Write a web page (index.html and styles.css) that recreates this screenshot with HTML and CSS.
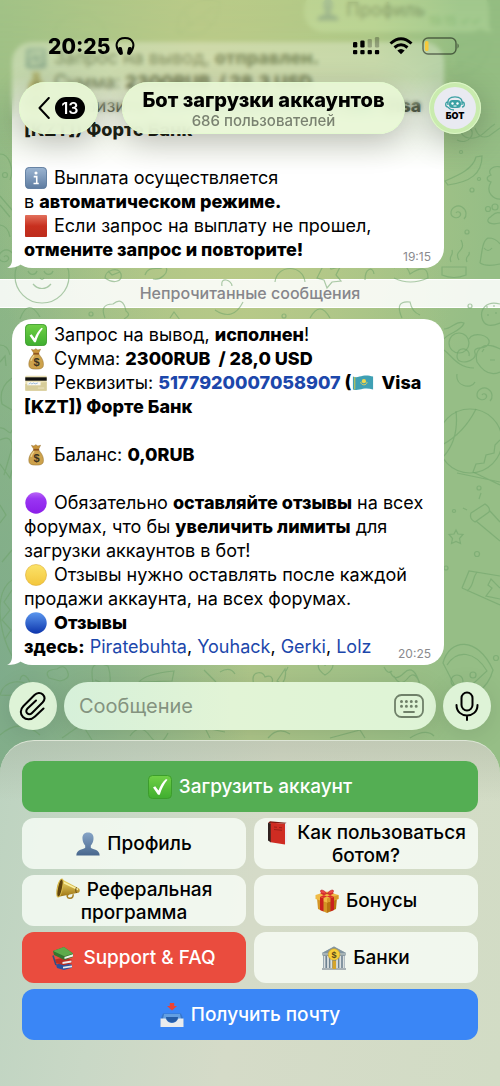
FILE: index.html
```html
<!DOCTYPE html>
<html lang="ru">
<head>
    <meta charset="UTF-8">
    <meta name="viewport" content="width=device-width, initial-scale=1.0">
    <title>Бот загрузки аккаунтов</title>
    <link rel="stylesheet" href="styles.css">
</head>
<body>
    <!-- emoji set -->
    <svg class="sprite" aria-hidden="true">
        <defs>
            <linearGradient id="g-green" x1="0" y1="0" x2="0" y2="1"><stop offset="0" stop-color="#6fd046"/><stop offset="1" stop-color="#3fae2f"/></linearGradient>
            <linearGradient id="g-info" x1="0" y1="0" x2="0" y2="1"><stop offset="0" stop-color="#9db6d3"/><stop offset="1" stop-color="#5d7ba0"/></linearGradient>
            <linearGradient id="g-red" x1="0" y1="0" x2="0" y2="1"><stop offset="0" stop-color="#e2705c"/><stop offset=".5" stop-color="#c8301f"/><stop offset="1" stop-color="#bd2c1c"/></linearGradient>
            <linearGradient id="g-purple" x1="0" y1="0" x2="0" y2="1"><stop offset="0" stop-color="#b965f5"/><stop offset=".3" stop-color="#9a35f3"/><stop offset="1" stop-color="#8b1fe8"/></linearGradient>
            <linearGradient id="g-yellow" x1="0" y1="0" x2="0" y2="1"><stop offset="0" stop-color="#fbe36a"/><stop offset="1" stop-color="#f3c63c"/></linearGradient>
            <linearGradient id="g-blue" x1="0" y1="0" x2="0" y2="1"><stop offset="0" stop-color="#5b97ee"/><stop offset="1" stop-color="#0d35ac"/></linearGradient>
            <linearGradient id="g-person" x1="0" y1="0" x2="0" y2="1"><stop offset="0" stop-color="#86a4c6"/><stop offset="1" stop-color="#48678d"/></linearGradient>
            <linearGradient id="g-gold" x1="0" y1="0" x2="0" y2="1"><stop offset="0" stop-color="#f3df70"/><stop offset="1" stop-color="#9c7212"/></linearGradient>
        </defs>
        <symbol id="e-check" viewBox="0 0 24 24">
            <rect x=".5" y=".5" width="23" height="23" rx="4" fill="url(#g-green)" stroke="#3c9d2c"/>
            <path d="M5 12.5l2.200-1.300 3.300 4.300C12 11 14.800 6.800 18 4l1.500.800C16 9 13.500 14 11.800 19.800H10z" fill="#fff"/>
        </symbol>
        <symbol id="e-refresh" viewBox="0 0 24 24">
            <rect x=".5" y=".5" width="23" height="23" rx="4" fill="url(#g-info)"/>
            <path d="M6 12a6 6 0 0 1 10-4.500M18 12a6 6 0 0 1-10 4.500M17 4v4h-4M7 20v-4h4" fill="none" stroke="#fff" stroke-width="2"/>
        </symbol>
        <symbol id="e-info" viewBox="0 0 24 24">
            <rect x=".5" y=".5" width="23" height="23" rx="4" fill="url(#g-info)" stroke="#59779b"/>
            <circle cx="12" cy="6.500" r="1.700" fill="#fff"/>
            <path d="M9.500 10.500h3.300v7M9.300 18h5.700" fill="none" stroke="#fff" stroke-width="1.700"/>
        </symbol>
        <symbol id="e-square" viewBox="0 0 24 24"><rect width="24" height="24" rx="1" fill="url(#g-red)"/></symbol>
        <symbol id="e-purple" viewBox="0 0 24 24"><circle cx="12" cy="12" r="11.700" fill="url(#g-purple)"/></symbol>
        <symbol id="e-yellow" viewBox="0 0 24 24"><circle cx="12" cy="12" r="11.500" fill="url(#g-yellow)" stroke="#dba92f" stroke-width=".6"/></symbol>
        <symbol id="e-blue" viewBox="0 0 24 24"><circle cx="12" cy="12" r="11.700" fill="url(#g-blue)"/></symbol>
        <symbol id="e-bag" viewBox="0 0 24 24">
            <path d="M9.500 5.500L7 1.500l2.800.700L11.800.800l2.200 1.400 3-.800L14.800 5.800z" fill="#c9953b" stroke="#8f6622" stroke-width=".5"/>
            <path d="M9.500 6.500C6 10.500 3.800 14 4.300 19c.400 3 2.700 4 7.900 4s7.500-1 7.800-4c.500-5-1.700-8.500-5.200-12.500z" fill="#cda24c" stroke="#94702b" stroke-width=".6"/>
            <path d="M6.500 14c.800-3 2-4.500 3.500-6" stroke="#ecd28d" stroke-width="1.400" fill="none"/>
            <path d="M9 6.300h6.500" stroke="#8b4e18" stroke-width="1.500"/>
            <text x="12.500" y="19.500" text-anchor="middle" font-size="12" font-weight="700" fill="#3d3420" font-family="Liberation Sans, sans-serif">$</text>
        </symbol>
        <symbol id="e-card" viewBox="0 0 24 24">
            <rect x=".3" y="4" width="23.400" height="16.500" rx="1" fill="#e9e0b4"/>
            <path d="M.300 13l23.400-2v8.500q0 1-1 1H1.300q-1 0-1-1z" fill="#d7cd9a"/>
            <path d="M.300 5.800h23.400v3.700H.300z" fill="#111"/>
            <path d="M2.500 11h14.500v3.500H2.500z" fill="#faf9f3"/>
            <path d="M4 13.200l2-1.200 1.500 1 2-1 1.500 1 3-1" fill="none" stroke="#6e9ccc" stroke-width=".7"/>
            <path d="M14 17.500h7" stroke="#eee6c5"/>
        </symbol>
        <symbol id="e-kz" viewBox="0 0 24 24">
            <path d="M1 5c4 1.500 7 0 11-.800S19 4 23 5v14c-4-1-7-1.500-11-.700S5 20.500 1 19z" fill="#3fa0b4"/>
            <path d="M3 5.500v13.700" stroke="#c9c552" stroke-width="1.200"/>
            <circle cx="13" cy="10" r="2.300" fill="#f0d84c"/>
            <path d="M9.500 11c.500 4 6.500 4 7 0" fill="none" stroke="#e2d05a"/>
        </symbol>
        <symbol id="e-person" viewBox="0 0 24 24">
            <path d="M12 .5c4 0 5.800 2.500 5.500 6.500-.2 3-1.300 5-2.700 6.500v2.300c1 1.700 8.700 1.200 8.900 7.700H.300c.200-6.500 7.900-6 8.900-7.700v-2.300C7.800 12 6.700 10 6.500 7 6.200 3 8 .5 12 .5z" fill="url(#g-person)"/>
        </symbol>
        <symbol id="e-book" viewBox="0 0 24 24">
            <path d="M2 2l2-1.700 16.500 1.500-1.500 1z" fill="#7c1710"/>
            <path d="M19 3l1.700-1v19L19 23.500z" fill="#eceaf0"/>
            <path d="M2 2l3 .2v19.300L2 19.500z" fill="#30211f"/>
            <path d="M4.700 1.600L19 3v20.500L4.700 21.300z" fill="#cf2c22"/>
            <path d="M8 6l3 .3M13 6.500l3 .3M8 8.500l8 .8" stroke="#8f1c15" stroke-width=".8"/>
        </symbol>
        <symbol id="e-horn" viewBox="0 0 24 24">
            <path d="M13 16c-3 1-2 4.500 1 4.300 2.500-.1 3.500-2 3-4" fill="none" stroke="#a47e22" stroke-width="1.500"/>
            <path d="M5 .8L23 10.500c1.500 1.500.700 4-.800 4.300L1.500 19C-.5 13 1 4 5 .8z" fill="url(#g-gold)"/>
            <path d="M5.500 3.500L22 11.500" stroke="#faf0a4" stroke-width="1.500"/>
            <ellipse cx="4" cy="10" rx="2.400" ry="9.200" transform="rotate(12 4 10)" fill="#5e430e" stroke="#d8ba4c" stroke-width="1.100"/>
            <path d="M20.500 9.300c-1 1.500-1 4 0 5.700" stroke="#694a10" fill="none"/>
        </symbol>
        <symbol id="e-gift" viewBox="0 0 24 24">
            <path d="M2 9l10 3.500V24L3 20z" fill="#d49524"/>
            <path d="M22 9l-10 3.500V24l9-4z" fill="#b9750f"/>
            <path d="M.500 6L12 2.500 23.500 6v4L12 13.500.500 10z" fill="#f0bb45"/>
            <path d="M12 9.500L23.500 6v4L12 13.500z" fill="#d99b2a"/>
            <path d="M5 8l3.500 1v13.500L5 21zM19 8l-3.500 1v13.500L19 21z" fill="#c9211e"/>
            <path d="M5 7.800L15.500 3.600l3.500 1L8.500 9zM19 7.800L8.500 3.600 5 4.600 15.500 9z" fill="#dd302c"/>
            <path d="M12 4.500C8 5.500 6 4.500 5.500 2.500 5 .500 8 0 12 4.500zm0 0c4 1 6 0 6.500-2C19 .500 16 0 12 4.500z" fill="#ec4844" stroke="#a61b1a" stroke-width=".5"/>
        </symbol>
        <symbol id="e-books" viewBox="0 0 24 24">
            <path d="M4 18.500l7-1.500 9 1.700v3L12 24 5 22z" fill="#2d519d"/>
            <path d="M11 20.700l9-1.200v1.800l-9 1.300z" fill="#e8e7e8"/>
            <path d="M3 13.500l9-2 8 2.300v3.500l-8.500 2L4 17z" fill="#bc2d22"/>
            <path d="M10.500 16l9-1.500v2l-9 1.500z" fill="#eeecef"/>
            <path d="M1 5L12 1l9 6.500V11l-8.500 3L2 9z" fill="#34752f"/>
            <path d="M1 5L12 1l9 6.500-8.500 2.800z" fill="#5eaa4b"/>
            <path d="M12.500 11L21 8.200v2.200l-8.500 2.700z" fill="#f1f1ec"/>
            <path d="M1 9.500l3 9.500" stroke="#344e80" stroke-width="1.600"/>
        </symbol>
        <symbol id="e-bank" viewBox="0 0 24 24">
            <path d="M1 9h22v13H1z" fill="#6e8391"/>
            <path d="M0 22h24v2H0z" fill="#a9b2b5"/>
            <path d="M2.500 10v12M6 10v12M9.300 13v9M15 13v9M18.300 10v12M21.700 10v12" stroke="#dce1e0" stroke-width="1.800"/>
            <path d="M12 .500L24 7v2.500H0V7z" fill="#a7b4b6"/>
            <path d="M12 .500L24 7H0z" fill="#8295a0"/>
            <path d="M10.500 15h3.500v8h-3.500z" fill="#d5a42a"/>
            <circle cx="12" cy="8.500" r="5.800" fill="#f6cf3b" stroke="#d0a01d" stroke-width=".6"/>
            <text x="12" y="12" text-anchor="middle" font-size="9" font-weight="700" fill="#584719" font-family="Liberation Sans, sans-serif">$</text>
        </symbol>
        <symbol id="e-inbox" viewBox="0 0 24 24">
            <path d="M3 10.500h18l2.500 6V21H.500v-4.500z" fill="#3676ca"/>
            <path d="M4 11h16l1 5H3z" fill="#639fe2"/>
            <path d="M6 14c0 7 12 7 12 0z" fill="#255da8"/>
            <path d="M.500 15.500h4.700C7 16 7 20 12 20s5-4 6.800-4.500h4.700V24H.500z" fill="#e9ecee"/>
            <path d="M9.800 0h4.400v3H17l-5 4.500L7 3h2.800z" fill="#ea4335"/>
        </symbol>
    </svg>

    <div class="app">
        <!-- wallpaper doodles -->
        <svg class="wallpaper" viewBox="0 0 500 1086" preserveAspectRatio="xMidYMin slice" aria-hidden="true">
            <defs>
                <g id="d-swirl"><path d="M0 0c2-3 6 0 4 3s-9 2-9-3 6-9 11-6 5 9 2 12"/></g>
                <g id="d-star"><path d="M0-7l2 4 5 .5-3.500 4 1 5L0 4.500-4.500 6.500l1-5-3.500-4 5-.5z"/></g>
                <g id="d-face"><circle r="27"/><path d="M-14-5c2 5 8 4 9 0M2-5c2 5 8 4 9 0M-9 8c5 6 13 6 18 0M-2 2q2 3 4 0"/></g>
                <g id="d-heart"><path d="M0 6c-9-6-8-13-3-13q3 0 3 4 1-5 5-4c6 2 2 9-5 13z"/></g>
                <g id="d-leaf"><path d="M-22 14C-26-10-6-24 20-18 18 6 2 20-22 14zM-22 14L14-13M-10 6l-4-14M-1-2l12 4"/></g>
            </defs>
            <g fill="none" stroke="#6da269" stroke-opacity=".55" stroke-width="1.200">
                <path d="M457 140c12 6 20-8 12-12s-12 8 0 10 16-8 26-14M475 128q4 12 14 8l11-8"/>
                <circle cx="461" cy="152" r="1.500"/><circle cx="472" cy="190" r="2"/><circle cx="467" cy="232" r="2"/><circle cx="479" cy="179" r="1.500"/>
                <path d="M445 181c14-6 28-12 31-24l6-1c0 18-12 26-34 29zM501 167c-8-2-14 3-10 8-6 2-4 6 0 7-6 10 2 18 11 17"/>
                <use href="#d-swirl" x="456" y="213"/><use href="#d-swirl" x="482" y="395"/><use href="#d-swirl" x="4" y="257"/>
                <circle cx="488" cy="209" r="2.500"/><circle cx="495" cy="207" r="3"/><path d="M500 213c-6-2-7 3-11 5-4 5 3 7 11 5"/>
                <path d="M480 263c2-10 2-22 8-25q8 0 12 6M480 263q6 4 20 1M484 248q4 5 8 0M451 262c-3-6 3-6 1-12M459 260c-6-10 8-8 2-20M467 262c-3-6 4-6 2-10"/>
                <path d="M442 267h24v8q-12 5-24 0z"/>
                <circle cx="470" cy="306" r="2"/><path d="M500 304c-14-4-20 6-18 14s8 9 18 5M487 306v2M494 305v2M488 314v2M496 312v2"/>
                <circle cx="459" cy="343" r="10"/><path d="M444 339c4-6 18-8 20-16-8-3-12 6-20 6M469 339c4-8 22-4 20 4s-17 2-14 10-18 14-18 3 14-8 12 0M477 362c-3-12 6-22 23-13M477 362q10 16 23 10M457 374c-2 12 14 16 18 8M444 350c8 6 14 18 30 18M484 349l-2 3M490 360h5"/>
                <circle cx="470" cy="441" r="32"/><path d="M456 411q3 28-12 45M476 409q-12 24-34 36M500 440l-5 5-1 8-8 2-2 8-8 1-3 8 27 13M457 473l43 9"/>
                <path d="M471 513l14-9q6 4 4 8l-14 10q-6-3-4-9zM489 510l11 12M476 521l24 20M479 499l2-6M467 510l-4-2"/>
                <use href="#d-star" x="456" y="537"/><circle cx="477" cy="554" r="2.500"/><circle cx="446" cy="568" r="2"/><circle cx="454" cy="511" r="1.500"/><circle cx="479" cy="488" r="2"/>
                <path d="M462 588l7-17 31 5M462 588l38 17M477 572c-6 8-2 13-10 19M500 588l-9-9-3 6 4 3-6 8 14 3"/>
                <path d="M443 663c6-24 34-28 50 7-6 22-22 26-32 28zM447 665c10-16 28-14 40 6l-24 22"/><circle cx="457" cy="681" r="6"/><circle cx="473" cy="675" r="3"/><circle cx="496" cy="658" r="2.500"/>
                <path d="M0 154c10 0 14 16 10 26M0 196l12 14M0 205l10 12M0 225q8 1 10 12"/><circle cx="5" cy="175" r="2.500"/>
                <use href="#d-face" x="42" y="276"/>
                <path d="M105 278c0-8 14-12 16-4s-8 10-16 4zM108 271l4 4 8-3M145 275c4-12 16-2 20-10 6 8-6 16-12 14M222 286c-2-10 10-6 10 0M275 282c2-18 28-18 30 0M322 268l5-6 4 7 9-2-4 8 5 6-9 1-5 6-3-8-7-2zM365 280c0-12 8-14 9-6M394 268q10-10 16 6 18-12 18 4-18 8-34 0"/>
                <path d="M20 319q8-22 20-2M105 318q-6-14 8-14 10-8 13 7 6 4-2 8M170 318l4-6 6 8M215 310q18 12 28-8M310 318q10-18 20 0M402 318q-8-18 8-16 2 10 10 13"/><circle cx="91" cy="314" r="2"/><circle cx="284" cy="316" r="2"/>
                <path d="M0 345q8 0 10 10M0 362l5-6 1 10M12 378q-14 10-10 26l10 6M0 428c6-2 10 10 12 2M0 440q12-6 12 8L4 475M0 464l10 14 2-8M0 505l6 10-6 8"/>
                <path d="M12 580c-18 12-14 50 0 76M12 590l-8 12 6 8-8 10 9 10-6 9M12 550l-10 12"/>
                <path d="M0 695c4-16 24-16 30-8-10 4-14 10-30 8zM20 680c2-10 10-2 10 6M49 678q-6-8 8-9 8-6 11 4 2 6-8 8zM92 672q0-12 16-6 6 18-4 30-12-2-12-24zM95 680l10 4M139 682q6-8 35-11l-2 10zM204 670l12 12M220 672q10-6 15 2M253 679c0-8 10-8 12-2 8-4 10 6 4 8-8 6-16 4-16-6zM277 681l8-12q2 8-3 15zM288 667l-2 4"/>
                <use href="#d-heart" x="325" y="669"/><path d="M390 671q4 12 14 2t16 12M394 676q6 12 14 2t14 12M384 667q4 8 8 4"/>
                <path d="M0 735q20-18 40 0M62 738l20-14 10 16M130 736q10-14 20 0t18-3M210 738l-5-10 20 4M268 738q10-12 22-4M330 738l30-8 5 8M410 738q16-10 24-2"/>
                <use href="#d-face" x="80" y="40"/><use href="#d-leaf" x="200" y="20"/><use href="#d-leaf" x="470" y="60"/><use href="#d-swirl" x="30" y="90"/>
            </g>
        </svg>

        <header class="header">
            <div class="status">
                <div class="status-side">
                    <span class="clock">20:25</span>
                    <svg width="20" height="20" viewBox="0 0 20 20"><path d="M5 17.500C-1.500 9 2 2 10 2s11.500 7 5 15.500" fill="none" stroke="#000" stroke-width="2"/><rect x="3.500" y="11" width="4" height="8" rx="1.800" transform="rotate(-12 5 15)"/><rect x="12.500" y="11" width="4" height="8" rx="1.800" transform="rotate(12 15 15)"/></svg>
                </div>
                <div class="status-side status-icons">
                    <svg width="27" height="18" viewBox="0 0 27 18">
                        <rect x="0" y="5" width="4.300" height="5.500" rx="1.300"/><rect x="7.300" y="3.500" width="4.300" height="7" rx="1.300"/>
                        <g opacity=".25"><rect x="14.600" y="2" width="4.300" height="8.500" rx="1.300"/><rect x="21.900" y="0" width="4.300" height="10.500" rx="1.300"/></g>
                        <rect x="0" y="13" width="4.300" height="4.300" rx="1"/><rect x="7.300" y="13" width="4.300" height="4.300" rx="1"/><rect x="14.600" y="13" width="4.300" height="4.300" rx="1"/><rect x="21.900" y="13" width="4.300" height="4.300" rx="1"/>
                    </svg>
                    <svg width="24" height="18" viewBox="0 0 24 18"><g fill="none" stroke="#000" stroke-width="3"><path d="M1.500 6.500Q12-3 22.500 6.500"/><path d="M5.500 10.500q6.500-5.500 13 0"/></g><path d="M8.300 13.500q3.700-3 7.400 0L12 17.300z"/></svg>
                    <svg width="38" height="18" viewBox="0 0 38 18"><rect x="1" y="1" width="33" height="16" rx="5" fill="none" stroke="#000" stroke-opacity=".5" stroke-width="1.400"/><rect x="3" y="4" width="3.500" height="10" rx="1.500" fill="#f6c93b"/><path d="M35.500 6.300q2.500 2.700 0 5.400z" fill-opacity=".5"/></svg>
                </div>
            </div>
            <div class="nav">
                <button class="glass back" type="button" aria-label="Назад">
                    <svg width="12" height="22" viewBox="0 0 12 22"><path d="M10.800 1L1.500 11l9.300 10" fill="none" stroke="#000" stroke-width="2" stroke-linecap="round" stroke-linejoin="round"/></svg>
                    <span class="count">13</span>
                </button>
                <div class="glass title">
                    <h1>Бот загрузки аккаунтов</h1>
                    <p>686 пользователей</p>
                </div>
                <button class="glass avatar" type="button">
                    <span class="avatar-face">
                        <svg width="20" height="15" viewBox="0 0 20 15"><g fill="none" stroke="#3ba0a3" stroke-width="1.300"><path d="M3 9C2 3 5 .8 10 .8S18 3 17 9M2.800 6Q.700 6 .700 8.500T3 11M17.200 6q2.100 0 2.100 2.500T17 11M3 11q2 3 6 3"/></g><rect x="4" y="4" width="12" height="8" rx="3.500" fill="#3ba0a3"/><circle cx="7.500" cy="7.500" r="1.200" fill="#fff"/><circle cx="12.500" cy="7.500" r="1.200" fill="#fff"/><path d="M8.500 10h3" stroke="#fff"/></svg>
                        <b>БОТ</b>
                    </span>
                </button>
            </div>
        </header>

        <main class="chat">
            <div class="bubble bubble-out">
                <svg class="emoji"><use href="#e-person"/></svg>Профиль
                <span class="time">19:15 ✓✓</span>
            </div>

            <div class="bubble">
                <svg class="emoji"><use href="#e-refresh"/></svg>Запрос на вывод, <b>отправлен.</b><br>
                <svg class="emoji"><use href="#e-bag"/></svg>Сумма: <b>2300RUB&nbsp; / 28,3 USD</b><br>
                <svg class="emoji"><use href="#e-card"/></svg>Реквизиты: <b><a href="#">5177920007058907</a> (<svg class="emoji"><use href="#e-kz"/></svg>Visa<br>
                [KZT]) Форте Банк</b><br>
                <br>
                <svg class="emoji"><use href="#e-info"/></svg>Выплата осуществляется<br>
                в <b>автоматическом режиме.</b><br>
                <svg class="emoji"><use href="#e-square"/></svg>Если запрос на выплату не прошел,<br>
                <b>отмените запрос и повторите!</b>
                <span class="time">19:15</span>
            </div>

            <div class="unread">Непрочитанные сообщения</div>

            <div class="bubble">
                <svg class="emoji"><use href="#e-check"/></svg>Запрос на вывод, <b>исполнен</b>!<br>
                <svg class="emoji"><use href="#e-bag"/></svg>Сумма: <b>2300RUB&nbsp; / 28,0 USD</b><br>
                <svg class="emoji"><use href="#e-card"/></svg>Реквизиты: <b><a href="#">5177920007058907</a> (<svg class="emoji"><use href="#e-kz"/></svg>Visa<br>
                [KZT]) Форте Банк</b><br>
                <br>
                <svg class="emoji"><use href="#e-bag"/></svg>Баланс: <b>0,0RUB</b><br>
                <br>
                <svg class="emoji"><use href="#e-purple"/></svg>Обязательно <b>оставляйте отзывы</b> на всех<br>
                форумах, что бы <b>увеличить лимиты</b> для<br>
                загрузки аккаунтов в бот!<br>
                <svg class="emoji"><use href="#e-yellow"/></svg>Отзывы нужно оставлять после каждой<br>
                продажи аккаунта, на всех форумах.<br>
                <svg class="emoji"><use href="#e-blue"/></svg><b>Отзывы<br>
                здесь:</b> <a href="#">Piratebuhta</a>, <a href="#">Youhack</a>, <a href="#">Gerki</a>, <a href="#">Lolz</a>
                <span class="time">20:25</span>
            </div>
        </main>

        <form class="composer">
            <button class="round" type="button" aria-label="Прикрепить">
                <svg width="28" height="30" viewBox="0 0 28 30"><path d="M24.500 17.500L16 25.500c-4 3.800-9 3.500-12 .5s-3-7.500.5-11L15.500 4c2.500-2.500 6-2.800 8.300-.5s2 5.500-.3 8L13 22c-1.500 1.500-3.500 1.500-4.800.3s-1.200-3.300.3-4.800L17 9.500" fill="none" stroke="#000" stroke-width="2" stroke-linecap="round"/></svg>
            </button>
            <div class="field">
                <input type="text" placeholder="Сообщение" aria-label="Сообщение">
                <button class="kb-toggle" type="button" aria-label="Клавиатура">
                    <svg width="30" height="24" viewBox="0 0 30 24"><rect x="1" y="1" width="28" height="22" rx="6.500" fill="none" stroke="#6f8069" stroke-width="1.800"/><path d="M7.500 7.500h16M7.500 12.300h16" stroke="#6f8069" stroke-width="3" stroke-dasharray="0 4.900" stroke-linecap="round"/><path d="M10 18h10" stroke="#6f8069" stroke-width="1.800" stroke-linecap="round"/></svg>
                </button>
            </div>
            <button class="round" type="button" aria-label="Голосовое сообщение">
                <svg width="24" height="30" viewBox="0 0 24 30"><g fill="none" stroke="#000" stroke-width="2" stroke-linecap="round"><rect x="6.500" y="1.500" width="11" height="18" rx="5.500"/><path d="M1.500 14c0 14 21 14 21 0M12 24.500v4.500"/></g></svg>
            </button>
        </form>

        <div class="keyboard">
            <button class="key key-green key-wide" type="button"><svg class="emoji"><use href="#e-check"/></svg>Загрузить аккаунт</button>
            <button class="key" type="button"><svg class="emoji"><use href="#e-person"/></svg>Профиль</button>
            <button class="key" type="button"><svg class="emoji"><use href="#e-book"/></svg>Как пользоваться<br>ботом?</button>
            <button class="key" type="button"><svg class="emoji"><use href="#e-horn"/></svg>Реферальная<br>программа</button>
            <button class="key" type="button"><svg class="emoji"><use href="#e-gift"/></svg>Бонусы</button>
            <button class="key key-red" type="button"><svg class="emoji"><use href="#e-books"/></svg>Support &amp; FAQ</button>
            <button class="key" type="button"><svg class="emoji"><use href="#e-bank"/></svg>Банки</button>
            <button class="key key-blue key-wide" type="button"><svg class="emoji"><use href="#e-inbox"/></svg>Получить почту</button>
        </div>
    </div>
</body>
</html>
```
FILE: styles.css
```css
* {
    box-sizing: border-box;
}
body {
    margin: 0;
    font-family: Inter, "Liberation Sans", sans-serif;
    color: #000;
}
button {
    border: none;
    padding: 0;
    font-family: inherit;
    color: inherit;
    cursor: pointer;
}
a {
    color: #1c47ab;
    text-decoration: none;
}
.sprite {
    position: absolute;
    width: 0;
    height: 0;
}
.app {
    position: relative;
    display: flex;
    flex-direction: column;
    height: 100vh;
    overflow: hidden;
    background:
        radial-gradient(ellipse 50% 30% at 48% 18%, #bccb88 0, rgba(188, 203, 136, 0) 100%),
        radial-gradient(ellipse 50% 45% at 0 62%, rgba(126, 171, 139, 0.95) 0, rgba(126, 171, 139, 0) 100%),
        linear-gradient(90deg, #90b985, #adc589 50%, #96be86 90%);
}
.wallpaper {
    position: absolute;
    top: 0;
    left: 0;
    width: 100%;
    height: 100%;
}

/* header */
.header {
    position: absolute;
    top: 0;
    left: 0;
    right: 0;
    z-index: 2;
    padding: 34px 19px 24px;
}
.header::before,
.header::after {
    content: "";
    position: absolute;
    top: 0;
    left: 0;
    right: 0;
    z-index: -1;
}
.header::before {
    height: 120px;
    backdrop-filter: blur(2px);
    -webkit-mask-image: linear-gradient(#000 80%, transparent);
    mask-image: linear-gradient(#000 80%, transparent);
}
.header::after {
    height: 170px;
    background: linear-gradient(90deg, #a6c486, #bccb88 40%, #b0c986 75%, #93bc80 92%);
    -webkit-mask-image: linear-gradient(rgba(0, 0, 0, 0.8), rgba(0, 0, 0, 0.68) 45%, rgba(0, 0, 0, 0.22) 70%, transparent);
    mask-image: linear-gradient(rgba(0, 0, 0, 0.8), rgba(0, 0, 0, 0.68) 45%, rgba(0, 0, 0, 0.22) 70%, transparent);
}
.status {
    display: flex;
    justify-content: space-between;
    align-items: center;
    height: 24px;
    margin-bottom: 24px;
    padding: 0 21px 0 29px;
}
.status-side {
    display: flex;
    align-items: center;
    gap: 5px;
}
.status-icons {
    gap: 9px;
}
.clock {
    font-size: 21px;
    font-weight: 800;
}
.nav {
    display: flex;
    gap: 24px;
}
.glass {
    height: 52px;
    border-radius: 26px;
    background: rgba(233, 247, 214, 0.9);
    backdrop-filter: blur(6px);
    box-shadow: inset 0 0 0 1px rgba(226, 250, 205, 0.8), 0 8px 32px rgba(0, 0, 0, 0.24);
}
.back {
    display: flex;
    align-items: center;
    justify-content: center;
    gap: 5px;
    width: 79px;
    padding-left: 6px;
}
.count {
    padding: 0 7px;
    border-radius: 11px;
    background: #000;
    color: #fff;
    font-size: 16px;
    font-weight: 600;
    line-height: 22px;
}
.title {
    flex: 1;
    text-align: center;
}
.title h1 {
    margin: 7px 0 0;
    font-size: 20px;
    font-weight: 800;
    line-height: 23px;
}
.title p {
    margin: 0;
    color: #7a8271;
    font-size: 15px;
    font-weight: 500;
    line-height: 17px;
}
.avatar {
    width: 52px;
    padding: 5px;
    background: #c9ebae;
}
.avatar-face {
    display: flex;
    flex-direction: column;
    align-items: center;
    justify-content: center;
    height: 42px;
    border-radius: 50%;
    background: #e9eaf1;
}
.avatar b {
    font-size: 9px;
    font-weight: 900;
    line-height: 10px;
}

/* messages */
.chat {
    flex: 1;
    display: flex;
    flex-direction: column;
    justify-content: flex-end;
    min-height: 0;
    padding-bottom: 17px;
}
.bubble {
    position: relative;
    flex-shrink: 0;
    margin: 0 56px 0 12px;
    padding: 4px 12px 6px;
    border-radius: 20px;
    background: #fff;
    font-size: 18px;
    line-height: 24px;
}
.bubble::before {
    content: "";
    position: absolute;
    left: -5px;
    bottom: 0;
    width: 16px;
    height: 20px;
    background: #fff;
    clip-path: path("M5 0V12C5 16 3 19 0 20C6 20 10 19 13 17L16 14V0Z");
}
.bubble b {
    font-weight: 800;
}
.bubble-out {
    align-self: flex-end;
    margin: 0 11px 10px 0;
    padding-right: 64px;
    background: #d9f5bd;
    line-height: 32px;
}
.bubble-out::before {
    left: auto;
    right: -5px;
    background: #d9f5bd;
    transform: scaleX(-1);
}
.time {
    position: absolute;
    right: 13px;
    bottom: 3px;
    color: #8a8a8e;
    font-size: 12px;
    line-height: 16px;
}
.bubble-out .time {
    right: 8px;
    color: #5aa84f;
}
.emoji {
    width: 22px;
    height: 22px;
    margin: 0 7px 0 1px;
    vertical-align: -5px;
}
.unread {
    margin: 11px 0;
    border: solid #fff;
    border-width: 1px 0;
    background: rgba(255, 255, 255, 0.88);
    color: #86868b;
    font-size: 16px;
    font-weight: 500;
    line-height: 27px;
    text-align: center;
}

/* message field */
.composer {
    position: relative;
    display: flex;
    gap: 7px;
    padding: 0 9px 10px;
}
.round,
.field {
    display: flex;
    align-items: center;
    justify-content: center;
    height: 48px;
    border-radius: 24px;
    background: #def3d7;
    box-shadow: 0 4px 24px rgba(0, 0, 0, 0.1);
}
.round {
    width: 48px;
}
.field {
    flex: 1;
    padding: 0 12px 0 15px;
    background: linear-gradient(90deg, #d6f0d9, #e2f4d6 45%, #def4d6);
}
.field input {
    flex: 1;
    min-width: 0;
    border: none;
    outline: none;
    padding: 0;
    background: none;
    font-family: inherit;
    font-size: 20px;
}
.field input::placeholder {
    color: #84937f;
    opacity: 1;
}
.kb-toggle {
    display: flex;
    background: none;
}

/* bot keyboard */
.keyboard {
    position: relative;
    display: grid;
    grid-template-columns: 1fr 1fr;
    gap: 6px 8px;
    padding: 20px 22px 46px;
    border-top: 1px solid #dde5d6;
    border-radius: 34px 34px 0 0;
    background:
        linear-gradient(rgba(150, 160, 140, 0.3), rgba(150, 160, 140, 0) 60px),
        linear-gradient(100deg, #bdd3c0, #c9d8c6 25%, #d5dbc8 50%, #d2dcc5);
}
.key {
    min-height: 51px;
    border-radius: 12px;
    background: rgba(250, 255, 248, 0.78);
    font-size: 19px;
    font-weight: 500;
    line-height: 23px;
}
.key-wide {
    grid-column: 1 / -1;
}
.key-green {
    background: #54ae53;
    color: #fff;
}
.key-red {
    background: #ea4c3e;
    color: #fff;
}
.key-blue {
    background: #3a86f6;
    color: #fff;
}
.key .emoji {
    width: 24px;
    height: 24px;
    margin: -2px 7px -2px 0;
    vertical-align: -4px;
}
```
